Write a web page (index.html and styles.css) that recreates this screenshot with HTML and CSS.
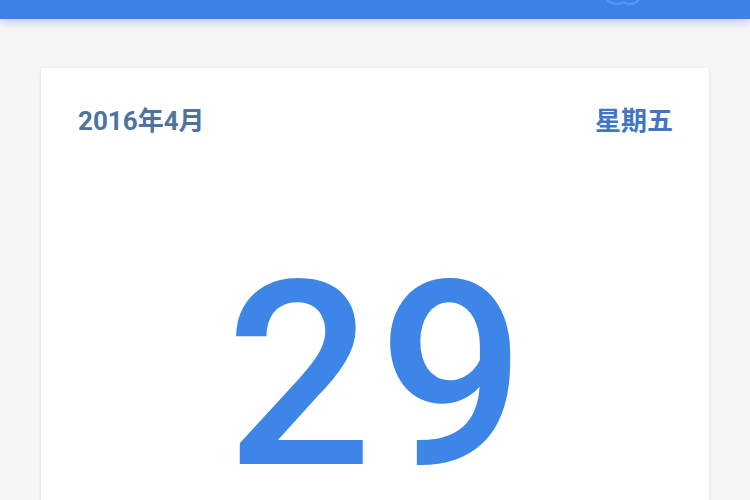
FILE: index.html
```html
<!doctype html>
<html>
    <head>
    <title>日历</title>
    <meta charset="utf-8">
    <link rel="stylesheet" href="styles.css">
    </head>

    <body>
        <div class="topbar">
            <svg class="topbar-icon" width="40" height="8" viewBox="0 0 40 8">
                <path d="M4 0 Q12 7 20 2 Q28 7 36 0" fill="none" stroke="#5a98ee" stroke-width="2"/>
            </svg>
        </div>
        <div class="page">
            <div class="card">
                <div class="card-head">
                    <span class="month">2016年4月</span>
                    <span class="weekday">星期五</span>
                </div>
                <div class="day">29</div>
            </div>
        </div>
    </body>
</html>
```

FILE: styles.css
```css
body {
    margin: 0;
    background: #f6f6f6;
    font-family: Roboto, "Noto Sans CJK SC", sans-serif;
    overflow: hidden;
}

.topbar {
    height: 19px;
    background: #3c82e6;
    box-shadow: 0 2px 10px rgba(60, 100, 170, 0.35);
    position: relative;
}

.topbar-icon {
    position: absolute;
    left: 603px;
    top: 0;
}

.page {
    padding: 49px 41px 0 41px;
}

.card {
    background: #fff;
    min-height: 440px;
    border-radius: 2px;
    box-shadow: 0 1px 3px rgba(0, 0, 0, 0.14);
    padding: 38px 36px 0 37px;
}

.card-head {
    display: flex;
    justify-content: space-between;
    font-size: 26px;
    font-weight: bold;
    line-height: 30px;
}

.month {
    color: #4d739e;
}

.weekday {
    color: #4276c4;
}

.day {
    text-align: center;
    margin-top: 131px;
    padding-left: 6px;
    letter-spacing: 6px;
    font-size: 258px;
    font-weight: 500;
    line-height: 0.85;
    color: #3d85e6;
}
```
